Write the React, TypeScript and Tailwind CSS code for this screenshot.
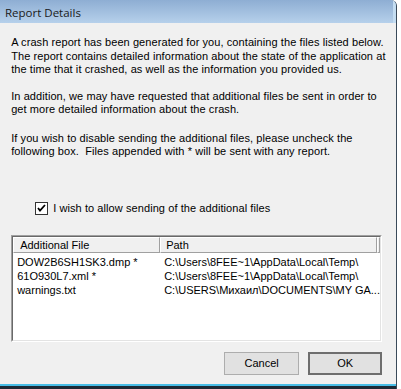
import { useState } from "react";

const files = [
  { name: "DOW2B6SH1SK3.dmp *", path: "C:\\Users\\8FEE~1\\AppData\\Local\\Temp\\" },
  { name: "61O930L7.xml *", path: "C:\\Users\\8FEE~1\\AppData\\Local\\Temp\\" },
  { name: "warnings.txt", path: "C:\\USERS\\Михаил\\DOCUMENTS\\MY GA..." },
];

export default function App() {
  const [allow, setAllow] = useState(true);

  return (
    <div className="w-[401px] h-[389px] bg-white">
      <div className="w-[397px] h-[389px] flex flex-col rounded-tr-[6px] overflow-hidden border-r border-[#3a4a5a] bg-[#aecbea]">
        {/* Title bar */}
        <div className="h-[23px] shrink-0 bg-gradient-to-b from-[#8eaed3] to-[#b6d0eb] flex items-center pl-[5px] pt-[2px] text-[11.5px] text-[#1a1a1a] font-['Open_Sans',sans-serif] border-r-[3px] border-[#c4ddf2]">
          Report Details
        </div>

        {/* Body */}
        <div className="flex-1 flex min-h-0">
          <div className="w-[1px] bg-[#aecbea]" />
          <div className="flex-1 bg-[#f0f0f0] flex flex-col pl-[11px] pr-[10px] text-[11px] leading-[13.5px] text-black font-['Liberation_Sans',Arial,sans-serif]">
            <div className="pt-[13px] whitespace-nowrap tracking-[0.08px]">
              <p>A crash report has been generated for you, containing the files listed below.</p>
              <p>The report contains detailed information about the state of the application at</p>
              <p>the time that it crashed, as well as the information you provided us.</p>
            </div>
            <div className="pt-[13px] whitespace-nowrap tracking-[0.08px]">
              <p>In addition, we may have requested that additional files be sent in order to</p>
              <p>get more detailed information about the crash.</p>
            </div>
            <div className="pt-[15px] whitespace-nowrap tracking-[0.08px]">
              <p>If you wish to disable sending the additional files, please uncheck the</p>
              <p>following box.&nbsp; Files appended with * will be sent with any report.</p>
            </div>

            {/* Checkbox */}
            <label className="mt-[43px] ml-[24px] flex items-center gap-[5px] cursor-default tracking-[0.08px]">
              <span
                onClick={() => setAllow(!allow)}
                className="w-[13px] h-[13px] border border-[#333] bg-white flex items-center justify-center"
              >
                {allow && (
                  <svg width="9" height="9" viewBox="0 0 9 9">
                    <path d="M1 4 L3 6.5 L8 1" fill="none" stroke="#000" strokeWidth="1.8" />
                  </svg>
                )}
              </span>
              <span>I wish to allow sending of the additional files</span>
            </label>

            {/* File list */}
            <div className="mt-[20px] h-[107px] w-[371px] border border-t-[#a0a0a0] border-l-[#a0a0a0] border-r-white border-b-white">
              <div className="h-full border border-t-[#696969] border-l-[#696969] border-r-[#e3e3e3] border-b-[#e3e3e3] bg-white flex flex-col">
                <div className="flex h-[16px] shrink-0 bg-[#f0f0f0] leading-[15px]">
                  <div className="w-[147px] pl-[6px] border border-t-white border-l-white border-r-[#a0a0a0] border-b-[#a0a0a0] whitespace-nowrap">
                    Additional File
                  </div>
                  <div className="w-[217px] pl-[5px] border border-t-white border-l-white border-r-[#a0a0a0] border-b-[#a0a0a0] whitespace-nowrap">
                    Path
                  </div>
                  <div className="flex-1 border border-t-white border-l-white border-r-[#a0a0a0] border-b-[#a0a0a0]" />
                </div>
                <div className="pt-[2px]">
                  {files.map((f) => (
                    <div key={f.name} className="flex h-[14px] leading-[14px] whitespace-nowrap">
                      <div className="w-[147px] pl-[4px]">{f.name}</div>
                      <div className="pl-[4px]">{f.path}</div>
                    </div>
                  ))}
                </div>
              </div>
            </div>

            {/* Buttons */}
            <div className="mt-[10px] flex justify-end gap-[9px] w-[371px]">
              <button className="w-[75px] h-[23px] bg-[#e1e1e1] border border-[#adadad] text-[11px] text-black">
                Cancel
              </button>
              <button className="w-[74px] h-[23px] bg-[#e1e1e1] border-2 border-[#6e6e6e] text-[11px] text-black">
                OK
              </button>
            </div>
          </div>
          <div className="w-[3px] bg-[#c4ddf2]" />
        </div>
        <div className="h-[2px] shrink-0 bg-[#48bde6]" />
        <div className="h-[3px] shrink-0 bg-[#1c2a36]" />
      </div>
    </div>
  );
}
